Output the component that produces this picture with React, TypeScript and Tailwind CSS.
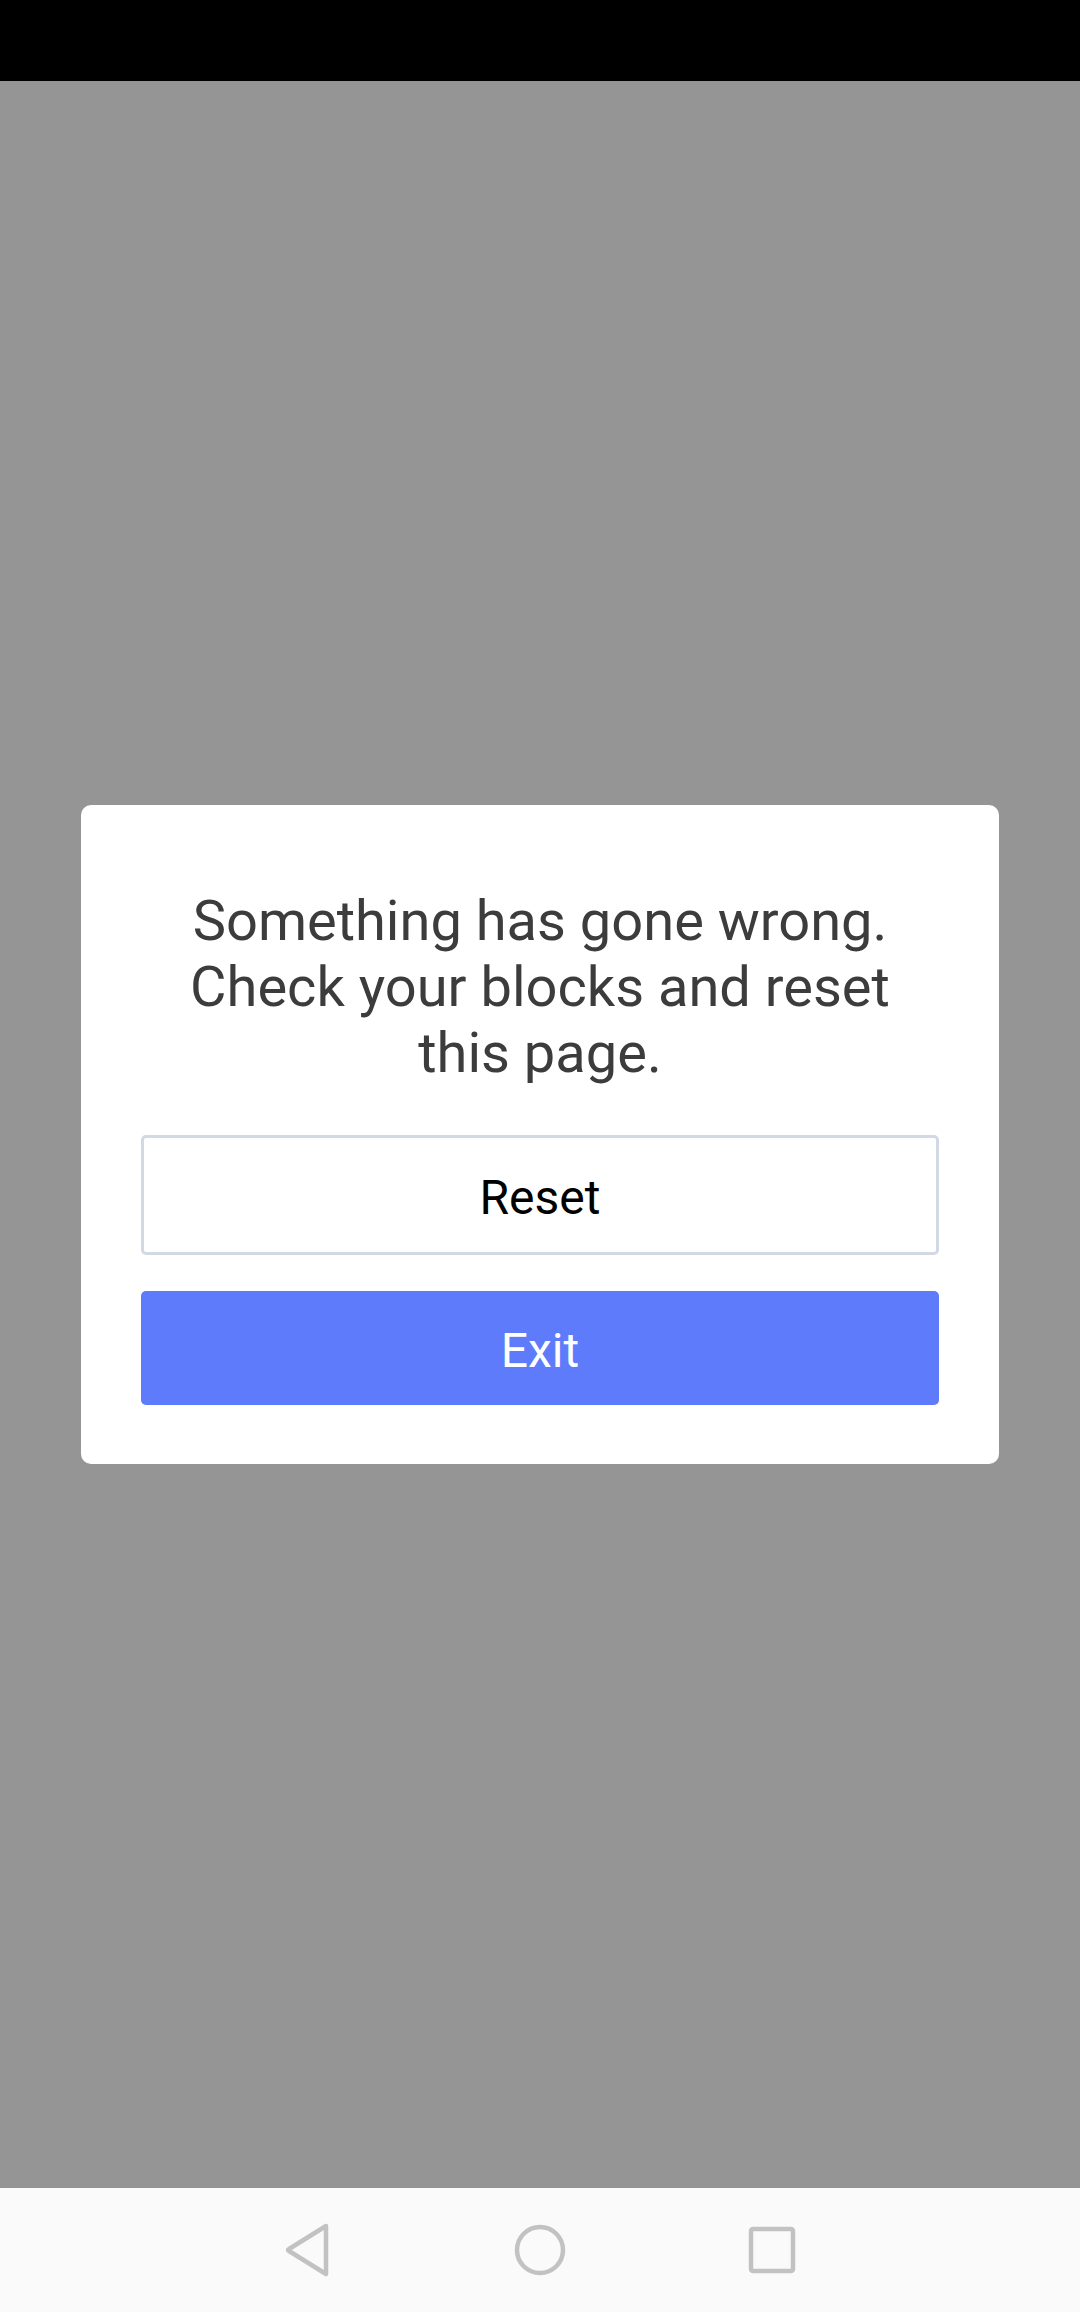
export default function App() {
  return (
    <div className="flex h-[2312px] w-[1080px] flex-col bg-[#959595] font-['Roboto',sans-serif]">
      {/* Status bar */}
      <div className="h-[81px] w-full shrink-0 bg-black" />

      {/* Dimmed area with dialog */}
      <div className="flex flex-1 items-center justify-center">
        <div className="w-[918px] rounded-[10px] bg-white px-[60px] pt-[83px] pb-[59px]">
          <p className="text-center text-[56px] leading-[66px] text-[#3c3c3c]">
            Something has gone wrong.
            <br />
            Check your blocks and reset
            <br />
            this page.
          </p>

          <button className="mt-[49px] flex h-[120px] w-full items-center justify-center rounded-[5px] border-[3px] border-[#d2d9e4] bg-white pt-[5px] text-[48px] text-black">
            Reset
          </button>

          <button className="mt-[36px] flex h-[114px] w-full items-center justify-center rounded-[5px] bg-[#5d7bfa] pt-[5px] text-[48px] text-white">
            Exit
          </button>
        </div>
      </div>

      {/* Navigation bar */}
      <div className="flex h-[124px] w-full shrink-0 items-center justify-center bg-[#fafafa]">
        <div className="flex w-[232px] justify-center">
          <svg width="48" height="54" viewBox="0 0 48 54" fill="none">
            <path
              d="M42 3 L5 26 Q3 27 5 28 L42 51 Z"
              stroke="#c2c2c2"
              strokeWidth="4.5"
              strokeLinejoin="round"
            />
          </svg>
        </div>
        <div className="flex w-[232px] justify-center">
          <svg width="54" height="54" viewBox="0 0 54 54" fill="none">
            <circle cx="27" cy="27" r="23" stroke="#c2c2c2" strokeWidth="4.5" />
          </svg>
        </div>
        <div className="flex w-[232px] justify-center">
          <svg width="50" height="50" viewBox="0 0 50 50" fill="none">
            <rect x="4" y="4" width="42" height="42" rx="2" stroke="#c2c2c2" strokeWidth="4.5" />
          </svg>
        </div>
      </div>
    </div>
  );
}
